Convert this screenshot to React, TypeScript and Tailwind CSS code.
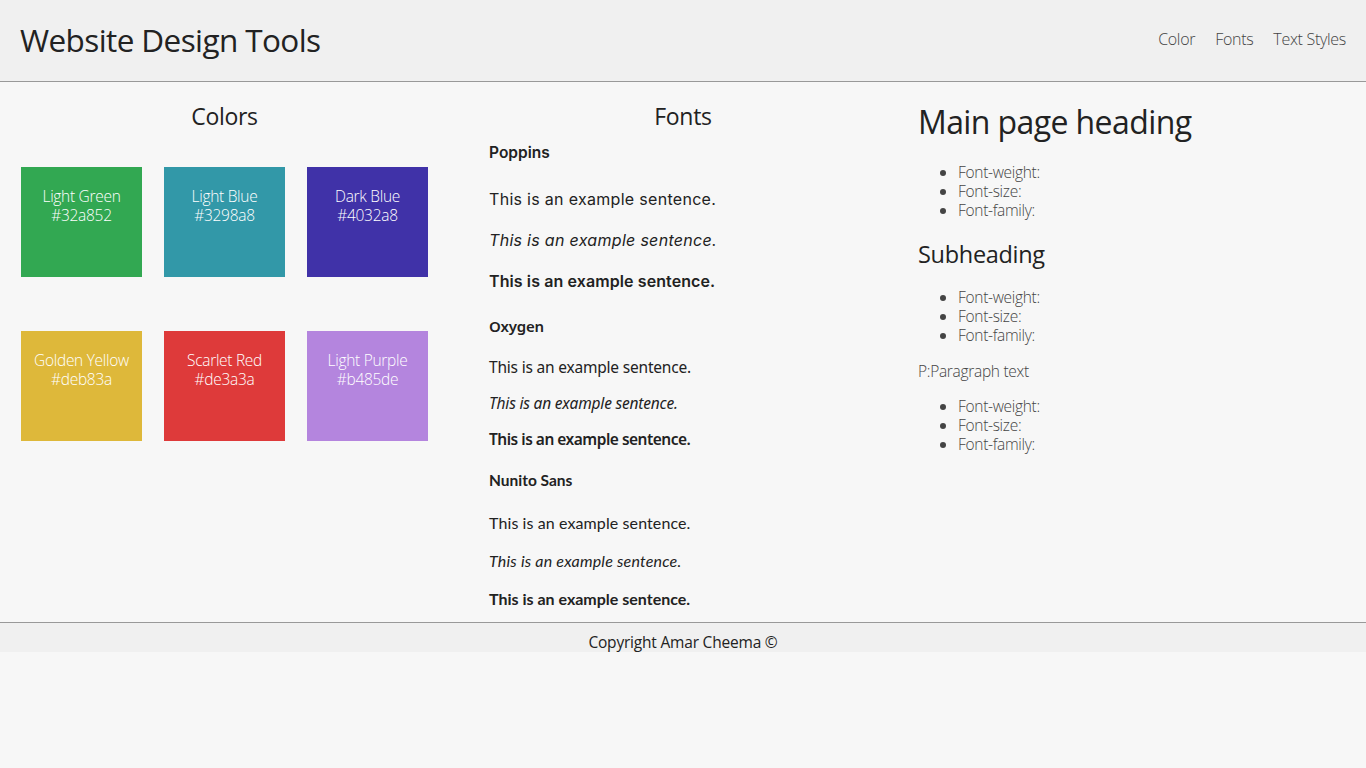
import React from "react";

const swatches = [
  { name: "Light Green", hex: "#32a852", bg: "bg-[#32a852]" },
  { name: "Light Blue", hex: "#3298a8", bg: "bg-[#3298a8]" },
  { name: "Dark Blue", hex: "#4032a8", bg: "bg-[#4032a8]" },
  { name: "Golden Yellow", hex: "#deb83a", bg: "bg-[#deb83a]" },
  { name: "Scarlet Red", hex: "#de3a3a", bg: "bg-[#de3a3a]" },
  { name: "Light Purple", hex: "#b485de", bg: "bg-[#b485de]" },
];

const fira = "font-['Open_Sans',sans-serif]";

function Swatch({ s }: { s: (typeof swatches)[number] }) {
  return (
    <div className={`${s.bg} w-[121px] h-[110px] text-white text-center pt-[20px] text-[15.5px] leading-[19px] font-light tracking-[-0.3px] ${fira}`}>
      <div>{s.name}</div>
      <div>{s.hex}</div>
    </div>
  );
}

function Bullets() {
  return (
    <ul className="list-disc pl-[40px] text-[15.5px] leading-[19px] font-light text-[#444] tracking-[-0.3px]">
      <li>Font-weight:</li>
      <li>Font-size:</li>
      <li>Font-family:</li>
    </ul>
  );
}

export default function App() {
  return (
    <div className={`min-h-screen bg-[#f7f7f7] text-[#222] ${fira}`}>
      <header className="h-[82px] bg-[#f0f0f0] border-b border-[#999] flex items-center justify-between px-[20px]">
        <h1 className="text-[31.5px] leading-[40px] tracking-[-0.6px] text-[#222] -mt-[2px]">Website Design Tools</h1>
        <nav className="flex gap-[20px] text-[16px] font-light text-[#444] tracking-[-0.3px] -mt-[3px]">
          <a>Color</a>
          <a>Fonts</a>
          <a>Text Styles</a>
        </nav>
      </header>
      <main className="flex">
        <section className="w-[449px]">
          <h2 className="mt-[19px] text-[23px] leading-[30px] text-center tracking-[-0.3px]">Colors</h2>
          <div className="mt-[36px] pl-[21px] grid grid-cols-[121px_121px_121px] gap-x-[22px] gap-y-[54px]">
            {swatches.map((s) => (
              <Swatch key={s.name} s={s} />
            ))}
          </div>
        </section>
        <section className="w-[462px] pb-[13px]">
          <h2 className="mt-[19px] text-[23px] leading-[30px] text-center tracking-[-0.3px] pl-[6px]">Fonts</h2>
          <div className="pl-[40px]">
            <div className="font-['Inter',sans-serif] text-[#222]">
              <div className="mt-[12px] text-[15.5px] leading-[20px] font-semibold">Poppins</div>
              <div className="mt-[26px] text-[16px] leading-[20px] tracking-[0.3px]">This is an example sentence.</div>
              <div className="mt-[21px] text-[16px] leading-[20px] italic tracking-[0.3px]">This is an example sentence.</div>
              <div className="mt-[21px] text-[16px] leading-[20px] font-semibold tracking-[0.1px]">This is an example sentence.</div>
            </div>
            <div className="font-['Noto_Sans',sans-serif] text-[#222]">
              <div className="mt-[25px] text-[15px] leading-[20px] font-semibold tracking-[-0.2px]">Oxygen</div>
              <div className="mt-[21px] text-[15.5px] leading-[20px] tracking-[-0.2px]">This is an example sentence.</div>
              <div className="mt-[16px] text-[15.5px] leading-[20px] italic tracking-[-0.2px]">This is an example sentence.</div>
              <div className="mt-[16px] text-[15.5px] leading-[20px] font-semibold tracking-[-0.5px]">This is an example sentence.</div>
            </div>
            <div className="font-['Lato',sans-serif] text-[#222]">
              <div className="mt-[21px] text-[15.5px] leading-[20px] font-bold">Nunito Sans</div>
              <div className="mt-[23px] text-[16px] leading-[20px] tracking-[0.1px]">This is an example sentence.</div>
              <div className="mt-[18px] text-[16px] leading-[20px] italic tracking-[0.2px]">This is an example sentence.</div>
              <div className="mt-[18px] text-[16px] leading-[20px] font-bold">This is an example sentence.</div>
            </div>
          </div>
        </section>
        <section className="flex-1 pl-[7px]">
          <h2 className="mt-[20px] text-[32px] leading-[40px] tracking-[-0.6px]">Main page heading</h2>
          <div className="mt-[21px]"><Bullets /></div>
          <h3 className="mt-[19px] text-[23.5px] leading-[30px] tracking-[-0.3px]">Subheading</h3>
          <div className="mt-[19px]"><Bullets /></div>
          <p className="mt-[17px] text-[15.5px] leading-[19px] font-light text-[#444] tracking-[-0.3px]">P:Paragraph text</p>
          <div className="mt-[16px]"><Bullets /></div>
        </section>
      </main>
      <footer className="h-[30px] bg-[#f0f0f0] border-t border-[#999] flex items-center justify-center text-[15.5px] text-[#222] tracking-[-0.2px] pt-[10px]">
        Copyright Amar Cheema ©
      </footer>
    </div>
  );
}
